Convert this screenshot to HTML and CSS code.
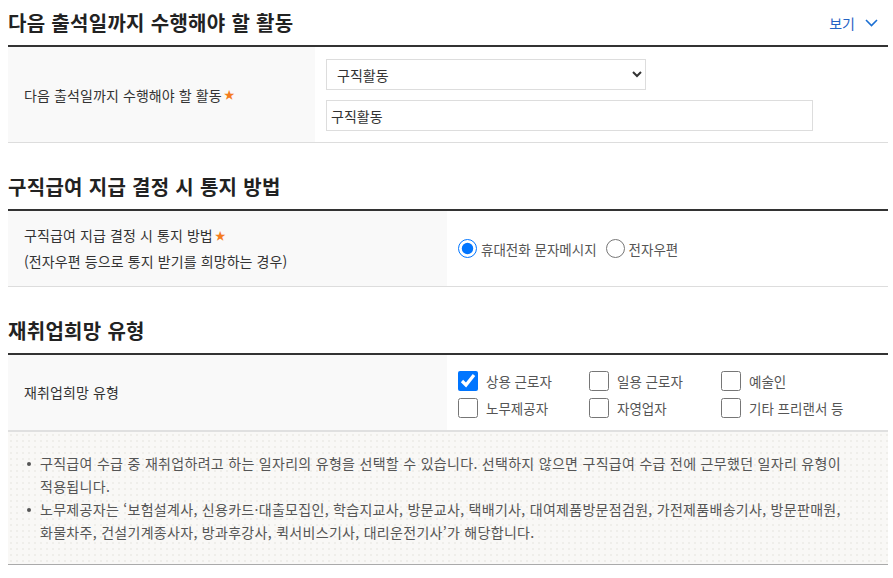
FILE: index.html
```html
<!DOCTYPE html>
<html lang="ko">
<head>
<meta charset="utf-8">
<title>구직활동</title>
<link rel="stylesheet" href="styles.css">
</head>
<body>
<div class="wrap">
  <section class="sec sec-first">
    <div class="sec-head">
      <h2>다음 출석일까지 수행해야 할 활동</h2>
      <button class="toggle" type="button">보기
        <svg width="13" height="8" viewBox="0 0 13 8"><path d="M1 1 L6.5 6.5 L12 1" fill="none" stroke="#1a6fd3" stroke-width="1.6"/></svg>
      </button>
    </div>
    <div class="row row-act">
      <div class="th th-narrow">다음 출석일까지 수행해야 할 활동<span class="req">★</span></div>
      <div class="td td-col">
        <select class="sel"><option>구직활동</option></select>
        <input class="txt" type="text" value="구직활동">
      </div>
    </div>
  </section>

  <section class="sec">
    <div class="sec-head">
      <h2>구직급여 지급 결정 시 통지 방법</h2>
    </div>
    <div class="row row-mid">
      <div class="th th-half">
        <p>구직급여 지급 결정 시 통지 방법<span class="req">★</span></p>
        <p>(전자우편 등으로 통지 받기를 희망하는 경우)</p>
      </div>
      <div class="td td-radio">
        <label class="opt"><input type="radio" name="noti" checked><span>휴대전화 문자메시지</span></label>
        <label class="opt"><input type="radio" name="noti"><span>전자우편</span></label>
      </div>
    </div>
  </section>

  <section class="sec">
    <div class="sec-head">
      <h2>재취업희망 유형</h2>
    </div>
    <div class="row row-mid row-last">
      <div class="th th-half"><p>재취업희망 유형</p></div>
      <div class="td td-check">
        <div class="checks">
          <label class="chk"><input type="checkbox" checked><span>상용 근로자</span></label>
          <label class="chk"><input type="checkbox"><span>일용 근로자</span></label>
          <label class="chk"><input type="checkbox"><span>예술인</span></label>
          <label class="chk"><input type="checkbox"><span>노무제공자</span></label>
          <label class="chk"><input type="checkbox"><span>자영업자</span></label>
          <label class="chk"><input type="checkbox"><span>기타 프리랜서 등</span></label>
        </div>
      </div>
    </div>
    <div class="info">
      <ul>
        <li>구직급여 수급 중 재취업하려고 하는 일자리의 유형을 선택할 수 있습니다. 선택하지 않으면 구직급여 수급 전에 근무했던 일자리 유형이 적용됩니다.</li>
        <li>노무제공자는 ‘보험설계사, 신용카드·대출모집인, 학습지교사, 방문교사, 택배기사, 대여제품방문점검원, 가전제품배송기사, 방문판매원, 화물차주, 건설기계종사자, 방과후강사, 퀵서비스기사, 대리운전기사’가 해당합니다.</li>
      </ul>
    </div>
  </section>
</div>
</body>
</html>
```
FILE: styles.css
```css
* { box-sizing: border-box; }
html, body { margin: 0; padding: 0; background: #fff; }
body {
  font-family: "Noto Sans CJK KR", "Noto Sans", sans-serif;
  color: #333;
  font-size: 14px;
}
.wrap { width: 880px; margin-left: 8px; }
.sec { margin-top: 21px; }
.sec-first { margin-top: 0; }
.sec-head {
  height: 45px;
  display: flex;
  align-items: center;
  justify-content: space-between;
  border-bottom: 2px solid #333;
  box-sizing: content-box;
}
.sec-head h2 {
  margin: 0;
  font-size: 20px;
  font-weight: 700;
  color: #222;
  line-height: 1;
  letter-spacing: 0.3px;
}
.toggle {
  border: 0;
  background: none;
  padding: 0 10px 0 0;
  font: inherit;
  font-size: 14px;
  color: #2363c4;
  display: flex;
  align-items: center;
  gap: 10px;
  cursor: pointer;
}
.row {
  display: flex;
  border-bottom: 1px solid #ddd;
}
.row-act { height: 96px; }
.row-mid { height: 76px; }
.row-last { height: 77px; border-bottom: 2px solid #e0e0e0; }
.th {
  background: #f9f9f9;
  display: flex;
  flex-direction: column;
  justify-content: center;
  padding-left: 16px;
  font-size: 14px;
  letter-spacing: 0.1px;
  color: #333;
}
.th p { margin: 0; line-height: 25px; }
.th-narrow { width: 307px; flex-direction: row; align-items: center; justify-content: flex-start; }
.th-half { width: 439px; }
.req { color: #f47c20; font-size: 11px; margin-left: 2px; position: relative; top: -1px; }
.td { flex: 1; }
.td-col {
  display: flex;
  flex-direction: column;
  gap: 10px;
  padding: 12px 0 0 11px;
}
.sel {
  width: 320px;
  height: 31px;
  border: 1px solid #ddd;
  border-radius: 0;
  background: #fff;
  font: inherit;
  font-size: 14px;
  color: #333;
  padding: 0 6px;
}
.txt {
  width: 487px;
  height: 31px;
  border: 1px solid #ddd;
  font: inherit;
  font-size: 14px;
  color: #333;
  padding: 0 4px;
  outline: none;
}
.td-radio {
  display: flex;
  align-items: center;
  padding-left: 11px;
  gap: 9px;
}
.opt { display: flex; align-items: center; gap: 4px; color: #555; font-size: 13.5px; }
.opt input { width: 19px; height: 19px; margin: 0; }
.td-check {
  display: flex;
  align-items: center;
  padding: 4px 0 0 11px;
}
.checks {
  display: grid;
  grid-template-columns: 131px 132px 140px;
  row-gap: 7px;
}
.chk { display: flex; align-items: center; gap: 8px; color: #555; font-size: 13.5px; height: 20px; }
.chk input { width: 20px; height: 20px; margin: 0; }
.info {
  background-color: #f9f8f6;
  background-image: radial-gradient(circle, #efeeea 0.9px, transparent 1.1px);
  background-size: 6px 6px;
  border-bottom: 1px solid #aaa;
  padding: 20px 16px 20px 0;
  height: 133px;
}
.info ul { margin: 0; padding: 0 0 0 32px; list-style: none; }
.info li {
  position: relative;
  font-size: 14px;
  letter-spacing: 0.3px;
  line-height: 23px;
  color: #555;
  word-break: keep-all;
}
.info li::before {
  content: "";
  position: absolute;
  left: -13px;
  top: 10px;
  width: 4px;
  height: 4px;
  border-radius: 50%;
  background: #555;
}
```
